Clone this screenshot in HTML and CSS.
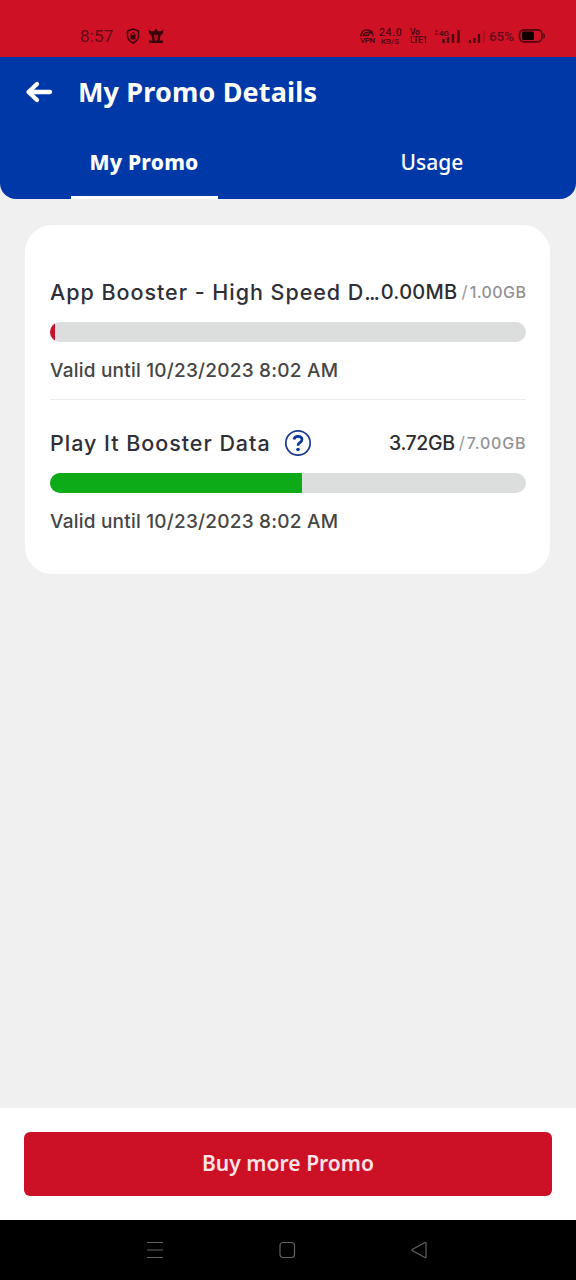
FILE: index.html
```html
<!DOCTYPE html>
<html lang="en">
<head>
<meta charset="utf-8">
<title>My Promo Details</title>
<link rel="stylesheet" href="styles.css">
</head>
<body>
<div class="screen">
  <div class="status">
    <div class="status-left">
      <span class="clock">8:57</span>
      <svg class="shield" width="14" height="16" viewBox="0 0 14 16"><path d="M7 1 L12.500 3 V8 Q12.500 12.500 7 15 Q1.500 12.500 1.500 8 V3 Z" fill="none" stroke="currentColor" stroke-width="1.500"/><path d="M4.500 7 H9.500 V11.500 H4.500 Z" fill="currentColor"/><path d="M5.300 7 V5.500 Q7 3.500 8.700 5.500 V7" fill="none" stroke="currentColor" stroke-width="1"/></svg>
      <svg class="crown" width="16" height="16" viewBox="0 0 16 16"><path d="M0.500 2 L3.500 3.200 H6 L8 .5 L10 3.200 H12.500 L15.500 2 L14.500 6.500 H1.500 Z M3 6 H13 L11.500 12.500 H15 V15 H1 V12.500 H4.500 Z" fill="currentColor"/><path d="M6 7 H10 L9.200 12.500 H6.800 Z" fill="#b90f21"/></svg>
    </div>
    <div class="status-right">
      <span class="stack vpn"><svg width="14" height="8" viewBox="0 0 14 8"><path d="M1 7.500 Q1 1 7 1 Q13 1 13 7.500 M3.500 6.500 Q4 3.500 7 3.500 L11 3 L8 6.500 Z" fill="none" stroke="currentColor" stroke-width="1.600"/></svg><b>VPN</b></span>
      <span class="stack rate"><b>24.0</b><i>KB/S</i></span>
      <span class="stack volte"><b>Vo</b><b>LTE1</b></span>
      <svg class="signal-a" width="28" height="16" viewBox="0 0 28 16"><path d="M1 3 H4 M1 6 H4" stroke="currentColor" stroke-width="1"/><text x="5" y="7.500" class="net">4G</text><path d="M9.500 15 V11 M14 15 V9 M19 15 V6 M24.500 15 V2" stroke="currentColor" stroke-width="2.500"/></svg>
      <svg class="signal-b" width="20" height="16" viewBox="0 0 20 16"><path d="M3 15 V12 M7.500 15 V10 M12 15 V6" stroke="currentColor" stroke-width="2.300"/><path d="M17 15 V3" stroke="currentColor" stroke-width="1.500" opacity=".3"/></svg>
      <span class="percent">65%</span>
      <svg class="battery" width="28" height="16" viewBox="0 0 28 16"><rect x="1.500" y="1.800" width="22.500" height="12" rx="4.500" fill="none" stroke="currentColor" stroke-width="1.800"/><rect x="4" y="3.500" width="12" height="8.600" rx="1.500" fill="#100000"/><path d="M25.500 4.800 Q28.500 8 25.500 11 Z" fill="currentColor"/></svg>
    </div>
  </div>

  <header class="header">
    <div class="titlebar">
      <svg width="28" height="24" viewBox="0 0 28 24"><path d="M25 12 H4 M12 4 L3.500 12 L12 20" fill="none" stroke="#fff" stroke-width="4.300" stroke-linejoin="round" stroke-linecap="round"/></svg>
      <h1 class="title">My Promo Details</h1>
    </div>
    <nav class="tabs">
      <div class="tab tab-active"><span class="tab-active-label">My Promo</span></div>
      <div class="tab"><span class="tab-label">Usage</span></div>
    </nav>
  </header>

  <main class="content">
    <section class="card">
      <article class="promo">
        <div class="row">
          <span class="name">App Booster - High Speed D<span class="dots">...</span></span>
          <span class="amount"><span class="left left-mb">0.00MB</span><span class="slash">/</span><span class="total total-one">1.00GB</span></span>
        </div>
        <div class="bar"><div class="fill fill-low" style="width:1.1%"></div></div>
        <p class="valid">Valid until 10/23/2023 8:02 AM</p>
      </article>
      <article class="promo promo-next">
        <div class="row">
          <span class="name">Play It Booster Data</span>
          <svg class="help" width="28" height="28" viewBox="0 0 28 28"><circle cx="14" cy="14" r="12.200" fill="none" stroke="#19398f" stroke-width="1.700"/><path d="M10 10.500 Q10.500 7.400 14 7.400 Q18 7.400 18 10.600 Q18 12.300 16 13.500 Q14 14.600 14 16.700" fill="none" stroke="#0a389e" stroke-width="2.700"/><circle cx="14" cy="20.500" r="1.800" fill="#0a389e"/></svg>
          <span class="amount"><span class="left left-gb">3.72GB</span><span class="slash">/</span><span class="total">7.00GB</span></span>
        </div>
        <div class="bar"><div class="fill" style="width:53%"></div></div>
        <p class="valid">Valid until 10/23/2023 8:02 AM</p>
      </article>
    </section>
  </main>

  <footer class="footer"><button class="buy">Buy more Promo</button></footer>

  <div class="navbar">
    <svg width="20" height="20" viewBox="0 0 20 20"><path d="M2 2.500 H18 M2 10 H18 M2 17.500 H18"/></svg>
    <svg width="20" height="20" viewBox="0 0 20 20"><rect x="3" y="2.500" width="14.500" height="15" rx="3"/></svg>
    <svg width="20" height="20" viewBox="0 0 20 20"><path d="M16 2.500 Q17 2 17 3.300 V16.700 Q17 18 16 17.400 L3.500 10.800 Q2.500 10 3.500 9.300 Z"/></svg>
  </div>
</div>
</body>
</html>
```
FILE: styles.css
```css
* { box-sizing: border-box; }
body { margin: 0; }
.screen { width: 576px; height: 1280px; display: flex; flex-direction: column; background: #f0f0f0; font-family: Inter, "Liberation Sans", sans-serif; overflow: hidden; }

.status { height: 57px; background: #cf1126; color: #4f0610; display: flex; justify-content: space-between; padding: 16px 30px 0 80px; font-family: Roboto, sans-serif; }
.status-left, .status-right { display: flex; align-items: center; height: 40px; }
.clock { width: 46px; font-size: 17px; letter-spacing: .2px; color: #650916; }
.shield { margin-right: 8px; }
.crown, .shield { color: #3a0309; }
.stack { display: flex; flex-direction: column; align-items: flex-start; line-height: 8px; }
.stack i { font-style: normal; font-weight: 500; font-size: 8px; line-height: 8px; padding-left: 2px; }
.vpn { width: 19px; font-size: 8px; }
.vpn b { line-height: 7px; letter-spacing: -.5px; }
.rate { width: 31px; }
.rate b { font-size: 10.500px; font-weight: 500; line-height: 11px; letter-spacing: .6px; }
.volte { width: 24px; font-size: 8.500px; letter-spacing: -.4px; }
.net { font-size: 8px; font-weight: 700; fill: currentColor; }
.signal-b { margin-left: 5px; }
.percent { font-size: 13.500px; width: 29px; margin-left: 2px; letter-spacing: -.2px; font-weight: 500; color: #650916; }

.header { height: 142px; background: #0038a8; border-radius: 0 0 16px 16px; color: #fff; font-family: "Noto Sans", sans-serif; }
.titlebar { height: 70px; display: flex; align-items: center; padding: 0 0 0 25px; gap: 25px; }
.title { margin: 0; padding-bottom: 1px; font-size: 27px; line-height: 36px; font-weight: 700; letter-spacing: .15px; }
.tabs { display: flex; height: 72px; }
.tab { flex: 1; display: flex; justify-content: center; }
.tab-active-label { width: 147px; height: 72px; padding-top: 21px; border-bottom: 3px solid #fff; text-align: center; font-size: 21px; line-height: 28px; font-weight: 800; letter-spacing: .2px; }
.tab-label { padding-top: 21px; font-size: 21px; line-height: 28px; font-weight: 500; }

.content { flex: 1; padding: 26px 26px 0 25px; }
.card { height: 349px; background: #fff; border-radius: 27px; padding: 52px 24px 0 25px; }
.promo { height: 123px; }
.promo-next { border-top: 1px solid #ebebeb; padding-top: 28px; }
.promo + .promo { height: 150px; margin-top: -1px; }
.row { display: flex; align-items: center; height: 30px; white-space: nowrap; }
.name { font-size: 21.500px; font-weight: 500; letter-spacing: .970px; color: #2f2f3a; }
.dots { letter-spacing: -1.900px; }
.help { margin-left: 13px; }
.amount { margin-left: auto; display: flex; align-items: center; line-height: 24px; }
.left { font-size: 19.500px; font-weight: 500; color: #2d2d31; }
.left-gb { letter-spacing: -.370px; }
.left-mb { font-size: 20px; letter-spacing: .3px; }
.slash { font-size: 17px; color: #999; padding: 0 2px 0 4px; }
.total { font-size: 16px; font-weight: 500; letter-spacing: .8px; margin-right: -.3px; color: #929292; }
.total-one { letter-spacing: .4px; }
.bar { height: 20px; margin-top: 15px; background: #dcdedd; border-radius: 10px; overflow: hidden; }
.fill { height: 100%; background: #0dab17; }
.fill-low { background: #c4122f; }
.valid { margin: 17px 0 0; font-size: 19px; line-height: 24px; font-weight: 500; letter-spacing: .220px; color: #454545; }

.footer { height: 112px; background: #fff; padding: 24px; }
.buy { display: block; width: 100%; height: 64px; padding: 0 0 2px; border: 0; border-radius: 6px; background: #cc1126; color: #ffe3e6; font: 600 21px "Noto Sans", sans-serif; letter-spacing: .050px; }
.navbar { height: 60px; background: #000; display: flex; justify-content: center; align-items: center; gap: 112px; padding-right: 2px; }
.navbar path, .navbar rect { fill: none; stroke: #626262; stroke-width: 1.200; }
```
